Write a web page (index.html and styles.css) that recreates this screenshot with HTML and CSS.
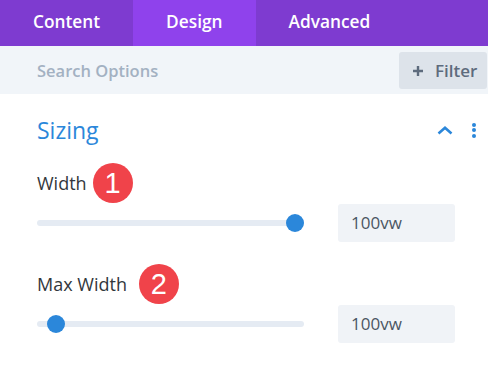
FILE: index.html
```html
<!DOCTYPE html>
<html lang="en">
<head>
    <meta charset="utf-8" />
    <title>Design - Sizing</title>
    <link rel="stylesheet" href="styles.css">
</head>
<body>
    <div class="panel">
        <ul class="tabs">
            <li>Content</li>
            <li class="current">Design</li>
            <li>Advanced</li>
        </ul>

        <div class="search">
            <span class="search-text">Search Options</span>
            <button class="filter">
                <svg width="12" height="12" viewBox="0 0 12 12"><path d="M6 1v10M1 6h10" stroke="#5d6b7d" stroke-width="2.4" fill="none"/></svg>
                Filter
            </button>
        </div>

        <div class="group">
            <div class="group-head">
                <h2>Sizing</h2>
                <div class="tools">
                    <svg class="chevron" width="16" height="9" viewBox="0 0 16 9"><path d="M1.5 7.5L8 1.8l6.5 5.7" stroke="#2b87da" stroke-width="2.6" fill="none"/></svg>
                    <span class="dots"><i></i><i></i><i></i></span>
                </div>
            </div>

            <div class="field">
                <div class="label">Width <span class="badge">1</span></div>
                <div class="control">
                    <div class="range"><span class="knob" style="left: 249px"></span></div>
                    <div class="input">100vw</div>
                </div>
            </div>

            <div class="field">
                <div class="label">Max Width <span class="badge badge-wide">2</span></div>
                <div class="control">
                    <div class="range"><span class="knob" style="left: 10px"></span></div>
                    <div class="input">100vw</div>
                </div>
            </div>
        </div>
    </div>
</body>
</html>
```

FILE: styles.css
```css
body,
div,
ul,
li,
h2
{
    margin: 0;
    padding: 0;
}

ul
{
    list-style-type: none;
}

body
{
    background: #fff;
    font-family: "Open Sans", "Noto Sans", sans-serif;
    width: 488px;
}

.tabs
{
    display: flex;
    height: 46px;
    background: #7e3bd0;
}

    .tabs li
    {
        padding: 0 33px;
        color: #fff;
        font-size: 17.3px;
        font-weight: 600;
        line-height: 44px;
    }

        .tabs li.current
        {
            background: #8f42ec;
        }

.search
{
    display: flex;
    align-items: center;
    justify-content: space-between;
    height: 48px;
    padding: 0 1px 0 37px;
    background: #f1f5f9;
}

.search-text
{
    color: #a3b1c2;
    font-size: 16.5px;
    font-weight: 600;
}

.filter
{
    display: flex;
    align-items: center;
    gap: 11px;
    width: 88px;
    height: 37px;
    margin-top: 1px;
    padding: 0 0 0 13px;
    border: 0;
    border-radius: 3px;
    background: #dde3ea;
    color: #5d6b7d;
    font-family: inherit;
    font-size: 17px;
    font-weight: 600;
}

.group
{
    padding: 20px 0 0 37px;
}

.group-head
{
    display: flex;
    align-items: center;
    justify-content: space-between;
    height: 32px;
    padding-right: 12px;
}

    .group-head h2
    {
        color: #2b87da;
        font-size: 23px;
        font-weight: 400;
        line-height: 32px;
    }

.tools
{
    display: flex;
    align-items: center;
    gap: 19px;
}

.dots
{
    display: flex;
    flex-direction: column;
    gap: 1.5px;
}

    .dots i
    {
        width: 4px;
        height: 4px;
        border-radius: 50%;
        background: #2b87da;
    }

.field
{
    padding-top: 25px;
}

    .field + .field
    {
        padding-top: 30px;
    }

.label
{
    display: flex;
    align-items: center;
    color: #32373c;
    font-size: 18px;
    line-height: 24px;
}

.badge
{
    display: flex;
    align-items: center;
    justify-content: center;
    width: 40px;
    height: 40px;
    margin: -8px 0 -8px 6px;
    border-radius: 50%;
    background: #f0434a;
    color: #fff;
    font-family: "Liberation Sans", Arial, sans-serif;
    font-size: 29px;
}

.badge-wide
{
    margin-left: 12px;
}

.control
{
    display: flex;
    align-items: center;
    gap: 34px;
    margin-top: 9px;
}

.range
{
    position: relative;
    width: 267px;
    height: 6px;
    border-radius: 3px;
    background: #e5ebf3;
}

.knob
{
    position: absolute;
    top: -6px;
    width: 18px;
    height: 18px;
    border-radius: 50%;
    background: #2b87da;
}

.input
{
    width: 104px;
    height: 38px;
    padding-left: 13px;
    border-radius: 3px;
    background: #f0f3f7;
    color: #4b5663;
    font-size: 17px;
    line-height: 38px;
}
```
